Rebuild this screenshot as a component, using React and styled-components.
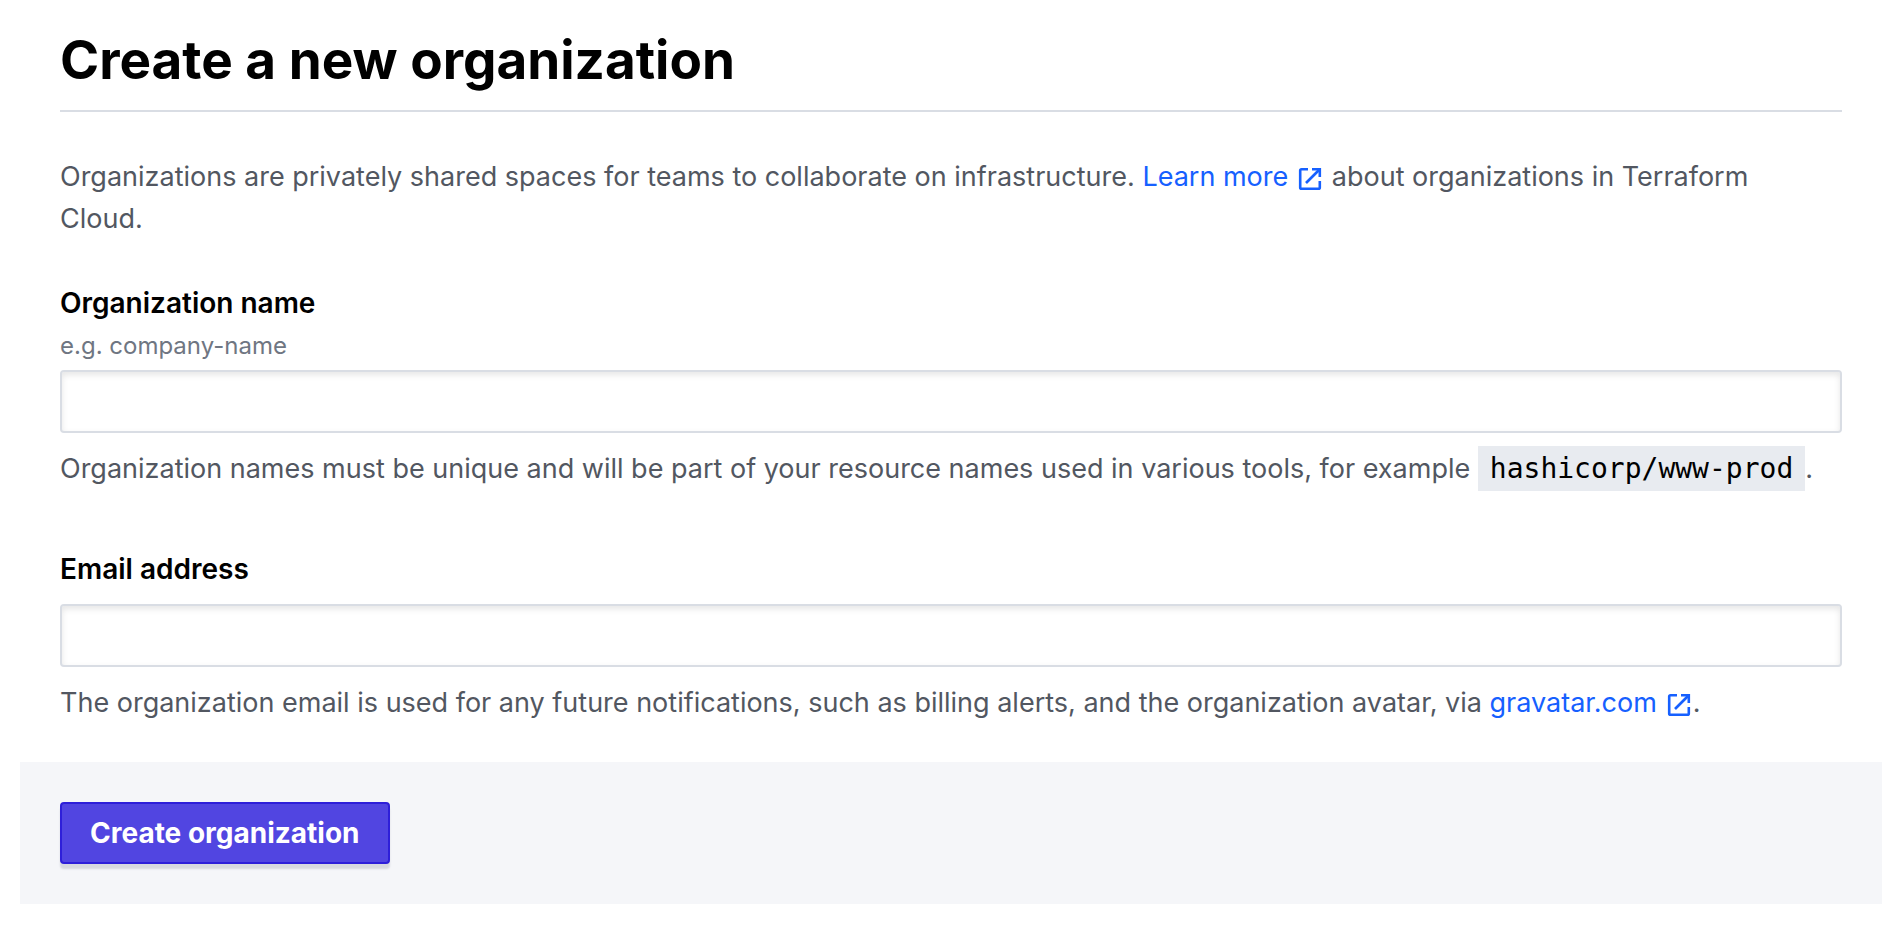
import React from "react";
import styled, { createGlobalStyle } from "styled-components";

const GlobalStyle = createGlobalStyle`
  *, *::before, *::after { box-sizing: border-box; }
  body {
    margin: 0;
    background: #fff;
    color: #525761;
    font-family: Inter, "Liberation Sans", sans-serif;
    font-size: 27px;
    line-height: 42px;
  }
`;

const Page = styled.main`
  padding: 0 22px 30px 20px;
`;

const Form = styled.form`
  display: flex;
  flex-direction: column;
`;

const Content = styled.div`
  display: flex;
  flex-direction: column;
  padding: 26px 40px 38px;
`;

const Title = styled.h1`
  margin: 0 0 44px;
  padding-bottom: 16px;
  border-bottom: 2px solid #d9dde4;
  color: #000;
  font-size: 53px;
  font-weight: 700;
  line-height: 68px;
`;

const Intro = styled.p`
  margin: 0 0 42px;
  padding-right: 40px;
`;

const Field = styled.div`
  display: flex;
  flex-direction: column;
  margin-top: ${({ $spaced }) => ($spaced ? "58px" : "0")};
`;

const Label = styled.label`
  color: #000;
  font-size: 28px;
  font-weight: 600;
`;

const Hint = styled.span`
  margin-top: 6px;
  color: #6f7682;
  font-size: 24px;
  line-height: 32px;
`;

const TextInput = styled.input`
  width: 100%;
  height: 63px;
  margin: ${({ $gap }) => $gap}px 0 15px;
  padding: 0 16px;
  border: 2px solid #d9dde4;
  border-radius: 4px;
  background: #fff;
  box-shadow: inset 0 3px 6px rgba(0, 0, 0, 0.1);
  color: #000;
  font: inherit;
  outline: none;
`;

const Help = styled.p`
  margin: 0;
`;

const Code = styled.code`
  padding: 6px 12px;
  background: #e8ebf0;
  color: #000;
  font-family: "DejaVu Sans Mono", monospace;
  font-size: 28px;
  line-height: 32px;
`;

const Link = styled.a`
  color: #1660ff;
  text-decoration: none;
`;

const LinkIcon = styled.svg`
  width: 24px;
  height: 24px;
  margin: 0 2px 0 10px;
  vertical-align: -5px;
`;

const Footer = styled.footer`
  padding: 40px;
  background: #f5f6f9;
`;

const SubmitButton = styled.button`
  display: block;
  height: 62px;
  padding: 0 28px;
  border: 2px solid #2e1fd9;
  border-radius: 4px;
  background: #5145e1;
  box-shadow: 0 5px 2px #d7d9df;
  color: #fff;
  font: inherit;
  font-size: 28px;
  font-weight: 700;
`;

const External = () => (
  <LinkIcon viewBox="0 0 24 24" fill="none" stroke="currentColor" strokeWidth="2.6" aria-hidden="true">
    <path d="M10 2.2H3.6Q2.2 2.2 2.2 3.6V20.4Q2.2 21.8 3.6 21.8H20.4Q21.8 21.8 21.8 20.4V14" />
    <path d="M14 2.2H21.8V10" />
    <path d="M21.5 2.5L8 16" />
  </LinkIcon>
);

export default function App() {
  return (
    <>
      <GlobalStyle />
      <Page>
        <Form>
          <Content>
            <Title>Create a new organization</Title>
            <Intro>
              Organizations are privately shared spaces for teams to collaborate on infrastructure.{" "}
              <Link href="#organizations">Learn more<External /></Link>{" "}
              about organizations in Terraform Cloud.
            </Intro>
            <Field>
              <Label htmlFor="name">Organization name</Label>
              <Hint id="name-hint">e.g. company-name</Hint>
              <TextInput id="name" type="text" aria-describedby="name-hint name-help" $gap={8} />
              <Help id="name-help">
                Organization names must be unique and will be part of your resource names used in
                various tools, for example <Code>hashicorp/www-prod</Code>.
              </Help>
            </Field>
            <Field $spaced>
              <Label htmlFor="email">Email address</Label>
              <TextInput id="email" type="email" aria-describedby="email-help" $gap={14} />
              <Help id="email-help">
                The organization email is used for any future notifications, such as billing alerts,
                and the organization avatar, via{" "}
                <Link href="#gravatar">gravatar.com<External /></Link>.
              </Help>
            </Field>
          </Content>
          <Footer>
            <SubmitButton type="button">Create organization</SubmitButton>
          </Footer>
        </Form>
      </Page>
    </>
  );
}
